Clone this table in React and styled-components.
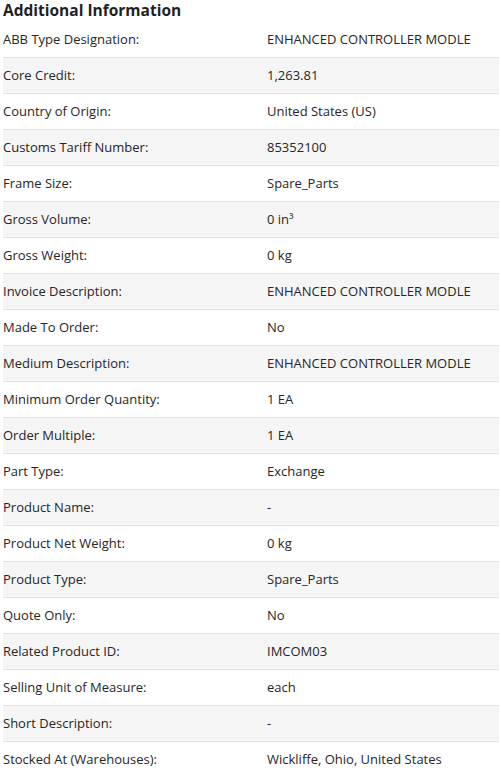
import React from 'react';
import styled, { createGlobalStyle } from 'styled-components';

const rows = [
  ['ABB Type Designation:', 'ENHANCED CONTROLLER MODLE'],
  ['Core Credit:', '1,263.81'],
  ['Country of Origin:', 'United States (US)'],
  ['Customs Tariff Number:', '85352100'],
  ['Frame Size:', 'Spare_Parts'],
  ['Gross Volume:', '0 in³'],
  ['Gross Weight:', '0 kg'],
  ['Invoice Description:', 'ENHANCED CONTROLLER MODLE'],
  ['Made To Order:', 'No'],
  ['Medium Description:', 'ENHANCED CONTROLLER MODLE'],
  ['Minimum Order Quantity:', '1 EA'],
  ['Order Multiple:', '1 EA'],
  ['Part Type:', 'Exchange'],
  ['Product Name:', '-'],
  ['Product Net Weight:', '0 kg'],
  ['Product Type:', 'Spare_Parts'],
  ['Quote Only:', 'No'],
  ['Related Product ID:', 'IMCOM03'],
  ['Selling Unit of Measure:', 'each'],
  ['Short Description:', '-'],
  ['Stocked At (Warehouses):', 'Wickliffe, Ohio, United States'],
];

const GlobalStyle = createGlobalStyle`
  body {
    margin: 0;
    background: #ffffff;
    font-family: "Open Sans", "Noto Sans", sans-serif;
    color: #1f1f1f;
  }
`;

const Section = styled.section`
  padding: 0 2px 0 3px;
`;

const Title = styled.h2`
  margin: 0;
  height: 22px;
  font-size: 15.5px;
  line-height: 20px;
  font-weight: 700;
  color: #1f1f1f;
`;

const Table = styled.div`
  display: flex;
  flex-direction: column;
`;

const Row = styled.div`
  display: grid;
  grid-template-columns: 264px 1fr;
  height: 36px;
  box-sizing: border-box;
  align-items: center;
  background: ${(p) => (p.shaded ? '#f5f5f5' : '#ffffff')};
  border-bottom: 1px solid #e2e2e2;
  font-size: 13px;
  color: #262626;
`;

const Cell = styled.div`
  padding-bottom: 1px;
`;

function App() {
  return (
    <Section>
      <GlobalStyle />
      <Title>Additional Information</Title>
      <Table>
        {rows.map(([label, value], i) => (
          <Row key={label} shaded={i % 2 === 1}>
            <Cell>{label}</Cell>
            <Cell>{value}</Cell>
          </Row>
        ))}
      </Table>
    </Section>
  );
}

export default App;
